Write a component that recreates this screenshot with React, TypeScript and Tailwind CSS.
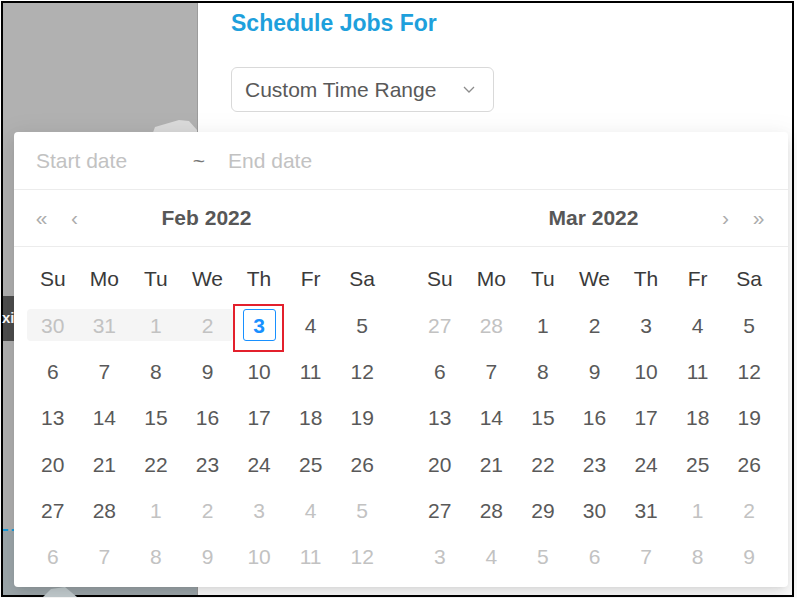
import React from 'react'

type Kind = 'dis' | 'out' | 'in' | 'today'
type Cell = { d: number; k: Kind }

const range = (a: number, b: number, k: Kind): Cell[] =>
  Array.from({ length: b - a + 1 }, (_, i) => ({ d: a + i, k }))

const FEB: Cell[] = [
  ...range(30, 31, 'dis'),
  ...range(1, 2, 'dis'),
  { d: 3, k: 'today' },
  ...range(4, 28, 'in'),
  ...range(1, 12, 'out'),
]

const MAR: Cell[] = [...range(27, 28, 'out'), ...range(1, 31, 'in'), ...range(1, 9, 'out')]

const WEEK = ['Su', 'Mo', 'Tu', 'We', 'Th', 'Fr', 'Sa']

const DayCell = ({ cell, index }: { cell: Cell; index: number }) => {
  // disabled days sit on one grey band, rounded at both ends
  const band =
    cell.k === 'dis'
      ? `w-full bg-[#f5f5f5] ${index === 0 ? 'rounded-l-[4px]' : ''} ${index === 3 ? 'rounded-r-[4px]' : ''}`
      : 'w-full'
  const color = cell.k === 'dis' || cell.k === 'out' ? 'text-[#c2c2c2]' : 'text-[#595959]'
  return (
    <div className="flex h-[46.3px] items-center justify-center">
      <div className={`flex h-[32px] items-center justify-center ${band}`}>
        {cell.k === 'today' ? (
          <span className="flex h-[32px] w-[33px] items-center justify-center rounded-[3px] border border-[#1890ff] font-bold text-[#1890ff]">
            {cell.d}
          </span>
        ) : (
          <span className={color}>{cell.d}</span>
        )}
      </div>
    </div>
  )
}

const Panel = ({ title, cells, side }: { title: string; cells: Cell[]; side: 'left' | 'right' }) => (
  <div className="flex-1">
    <div className="flex h-[57px] items-center border-b border-[#ececec] pl-[14px] pr-[16px] text-[21px] text-[#ababab]">
      <div className={`flex gap-[6px] ${side === 'left' ? '' : 'invisible'}`}>
        <span className="w-[27px] text-center">«</span>
        <span className="w-[27px] text-center">‹</span>
      </div>
      <div className="flex-1 text-center font-bold text-[#575757]">{title}</div>
      <div className={`flex gap-[6px] ${side === 'right' ? '' : 'invisible'}`}>
        <span className="w-[27px] text-center">›</span>
        <span className="w-[27px] text-center">»</span>
      </div>
    </div>
    <div className="px-[13px] pt-[9px] pb-[7px] text-[21px]">
      <div className="grid grid-cols-7">
        {WEEK.map((w) => (
          <div key={w} className="flex h-[46.3px] items-center justify-center text-[#3a3a3a]">
            {w}
          </div>
        ))}
        {cells.map((c, i) => (
          <DayCell key={i} cell={c} index={i} />
        ))}
      </div>
    </div>
  </div>
)

export default function App() {
  return (
    <div className="relative h-[598px] w-[797px] overflow-hidden bg-white font-['Liberation_Sans',Arial,sans-serif]">
      <div className="ml-px mt-px flex h-[596px] w-[793px] border-2 border-black">
        {/* dimmed map behind the drawer */}
        <div className="relative flex w-[194px] flex-col bg-[#b1b1b1]">
          <div className="h-[293px]" />
          <div className="flex h-[45px] items-center bg-[#4e4e4e] text-[15px] font-bold text-white">
            <span className="-ml-px">xi</span>
          </div>
          <div className="h-[188px]" />
          <div className="h-[2px] w-[14px] border-t-2 border-dashed border-[#1a9ddb]" />
          <div className="flex-1 bg-[#9ea8ac]" />
          <svg className="absolute left-[148px] top-[115px]" width="46" height="20" viewBox="0 0 46 20">
            <polygon points="4,9 28,2 38,3 46,12 46,20 0,20" fill="#dadada" />
          </svg>
          <svg className="absolute left-[40px] top-[582px]" width="34" height="12" viewBox="0 0 34 12">
            <polygon points="0,12 8,4 22,2 34,12" fill="#c6d0d3" />
          </svg>
        </div>

        <div className="flex-1 border-l border-[#9c9c9c] pl-[33px] pt-[6px]">
          <h1 className="text-[23px] leading-[28px] font-bold text-[#1ea0dc]">Schedule Jobs For</h1>
          <div className="mt-[30px] flex h-[45px] w-[263px] items-center justify-between rounded-[6px] border border-[#d9d9d9] pl-[13px] pr-[18px] text-[21px] text-[#595959]">
            <span>Custom Time Range</span>
            <svg width="12" height="7" viewBox="0 0 12 7" fill="none">
              <path d="M1 1l5 5 5-5" stroke="#8c8c8c" strokeWidth="1.3" />
            </svg>
          </div>
        </div>
      </div>

      {/* range picker dropdown */}
      <div className="absolute left-[14px] top-[132px] w-[774px] rounded-[4px] bg-white shadow-[0_3px_6px_-4px_rgba(0,0,0,0.12),0_6px_16px_0_rgba(0,0,0,0.08),0_9px_28px_8px_rgba(0,0,0,0.05)]">
        <div className="flex h-[58px] items-center border-b border-[#ececec] pl-[22px] text-[21px]">
          <span className="w-[150px] text-[#c2c2c2]">Start date</span>
          <span className="w-[26px] text-center text-[#777]">~</span>
          <span className="ml-[16px] text-[#c2c2c2]">End date</span>
        </div>
        <div className="flex">
          <Panel title="Feb 2022" cells={FEB} side="left" />
          <Panel title="Mar 2022" cells={MAR} side="right" />
        </div>
      </div>

      {/* annotation */}
      <div className="absolute left-[233px] top-[304px] h-[48px] w-[51px] border-2 border-[#e3202c]" />
    </div>
  )
}
